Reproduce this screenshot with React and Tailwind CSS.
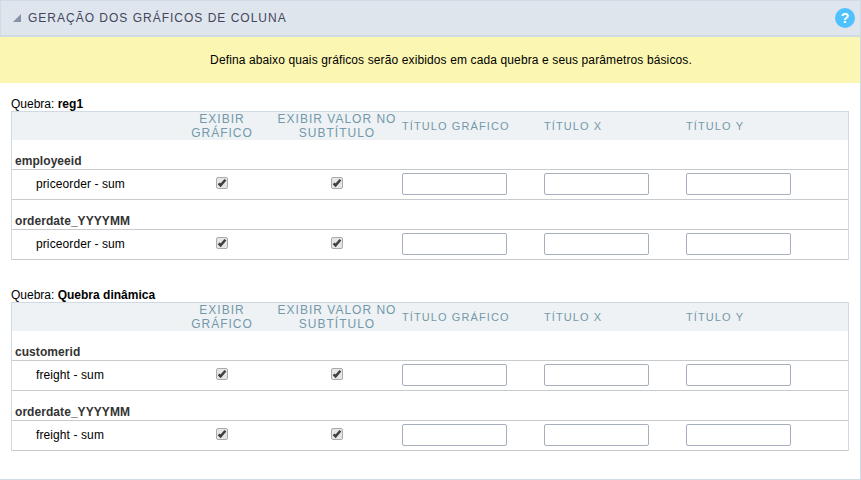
const sections = [
  { name: "reg1", groups: [["employeeid", "priceorder - sum"], ["orderdate_YYYYMM", "priceorder - sum"]] },
  { name: "Quebra dinâmica", groups: [["customerid", "freight - sum"], ["orderdate_YYYYMM", "freight - sum"]] },
];

const columns = "grid grid-cols-[180px_60px_20px_130px_142px_142px_1fr] items-center";

function Check() {
  return (
    <svg className="mb-px mr-px" width="12" height="12" viewBox="0 0 12 12" role="img" aria-label="checked">
      <rect x="0.5" y="0.5" width="11" height="11" rx="1.5" fill="#e6e6e6" stroke="#ababab" />
      <path d="M2.6 6.3 L4.6 8.4 L9.4 2.8" fill="none" stroke="#404040" strokeWidth="2.5" />
    </svg>
  );
}

function Field() {
  return <input type="text" className="block h-[22px] w-[105px] rounded-[2px] border border-[#a7afbf] bg-white" />;
}

function Section({ name, groups }) {
  return (
    <section>
      <p className="h-[14px] leading-[14px]">
        Quebra: <b>{name}</b>
      </p>
      <div className="border-x border-t border-[#d0dae2]">
        <div className={`${columns} h-7 bg-[#eef2f5] text-[#7499aa]`}>
          <span />
          <span className="justify-self-center whitespace-nowrap text-center leading-[14px] tracking-[1px]">
            EXIBIR<br />GRÁFICO
          </span>
          <span />
          <span className="justify-self-center whitespace-nowrap text-center leading-[14px] tracking-[1px]">
            EXIBIR VALOR NO<br />SUBTÍTULO
          </span>
          <span className="whitespace-nowrap text-[11px] tracking-[1.1px]">TÍTULO GRÁFICO</span>
          <span className="whitespace-nowrap text-[11px] tracking-[1.1px]">TÍTULO X</span>
          <span className="whitespace-nowrap text-[11px] tracking-[1.1px]">TÍTULO Y</span>
        </div>
        {groups.map(([group, measure]) => (
          <div key={group}>
            <div className="flex h-[30px] items-end border-b border-[#c8cbce] pl-[3px] font-bold leading-[16px] tracking-[0.06px] text-[#333]">{group}</div>
            <div className={`${columns} h-[30px] border-b border-[#c8cbce] pb-[2px]`}>
              <span className="pl-6 tracking-[0.1px]">{measure}</span>
              <span className="justify-self-center"><Check /></span>
              <span />
              <span className="justify-self-center"><Check /></span>
              <Field />
              <Field />
              <Field />
            </div>
          </div>
        ))}
      </div>
    </section>
  );
}

export default function App() {
  return (
    <main className="h-[480px] w-[861px] overflow-hidden border-b border-r border-[#d0dce4] bg-white font-['Liberation_Sans',Arial,sans-serif] text-[12px] leading-[14px] text-black">
      <header className="flex h-[37px] items-center border-b-2 border-l border-t border-b-[#d0dae2] border-l-[#d0dce4] border-t-[#d0dce4] bg-[#dfe5ed] pl-3 pr-[5px]">
        <svg width="8" height="8" viewBox="0 0 8 8"><path d="M8 0V8H0Z" fill="#8592a8" /></svg>
        <h1 className="ml-[7px] tracking-[1px] text-[#42465c]">GERAÇÃO DOS GRÁFICOS DE COLUNA</h1>
        <span className="ml-auto flex size-5 items-center justify-center rounded-full bg-[#4fc1ff] text-[14px] font-bold text-white">?</span>
      </header>
      <div className="flex h-[46px] items-center justify-center bg-[#fbf7b3] pl-[42px] tracking-[0.12px]">
        Defina abaixo quais gráficos serão exibidos em cada quebra e seus parâmetros básicos.
      </div>
      <div className="flex flex-col gap-7 px-[11px] pt-[14px]">
        {sections.map((s) => <Section key={s.name} {...s} />)}
      </div>
    </main>
  );
}
